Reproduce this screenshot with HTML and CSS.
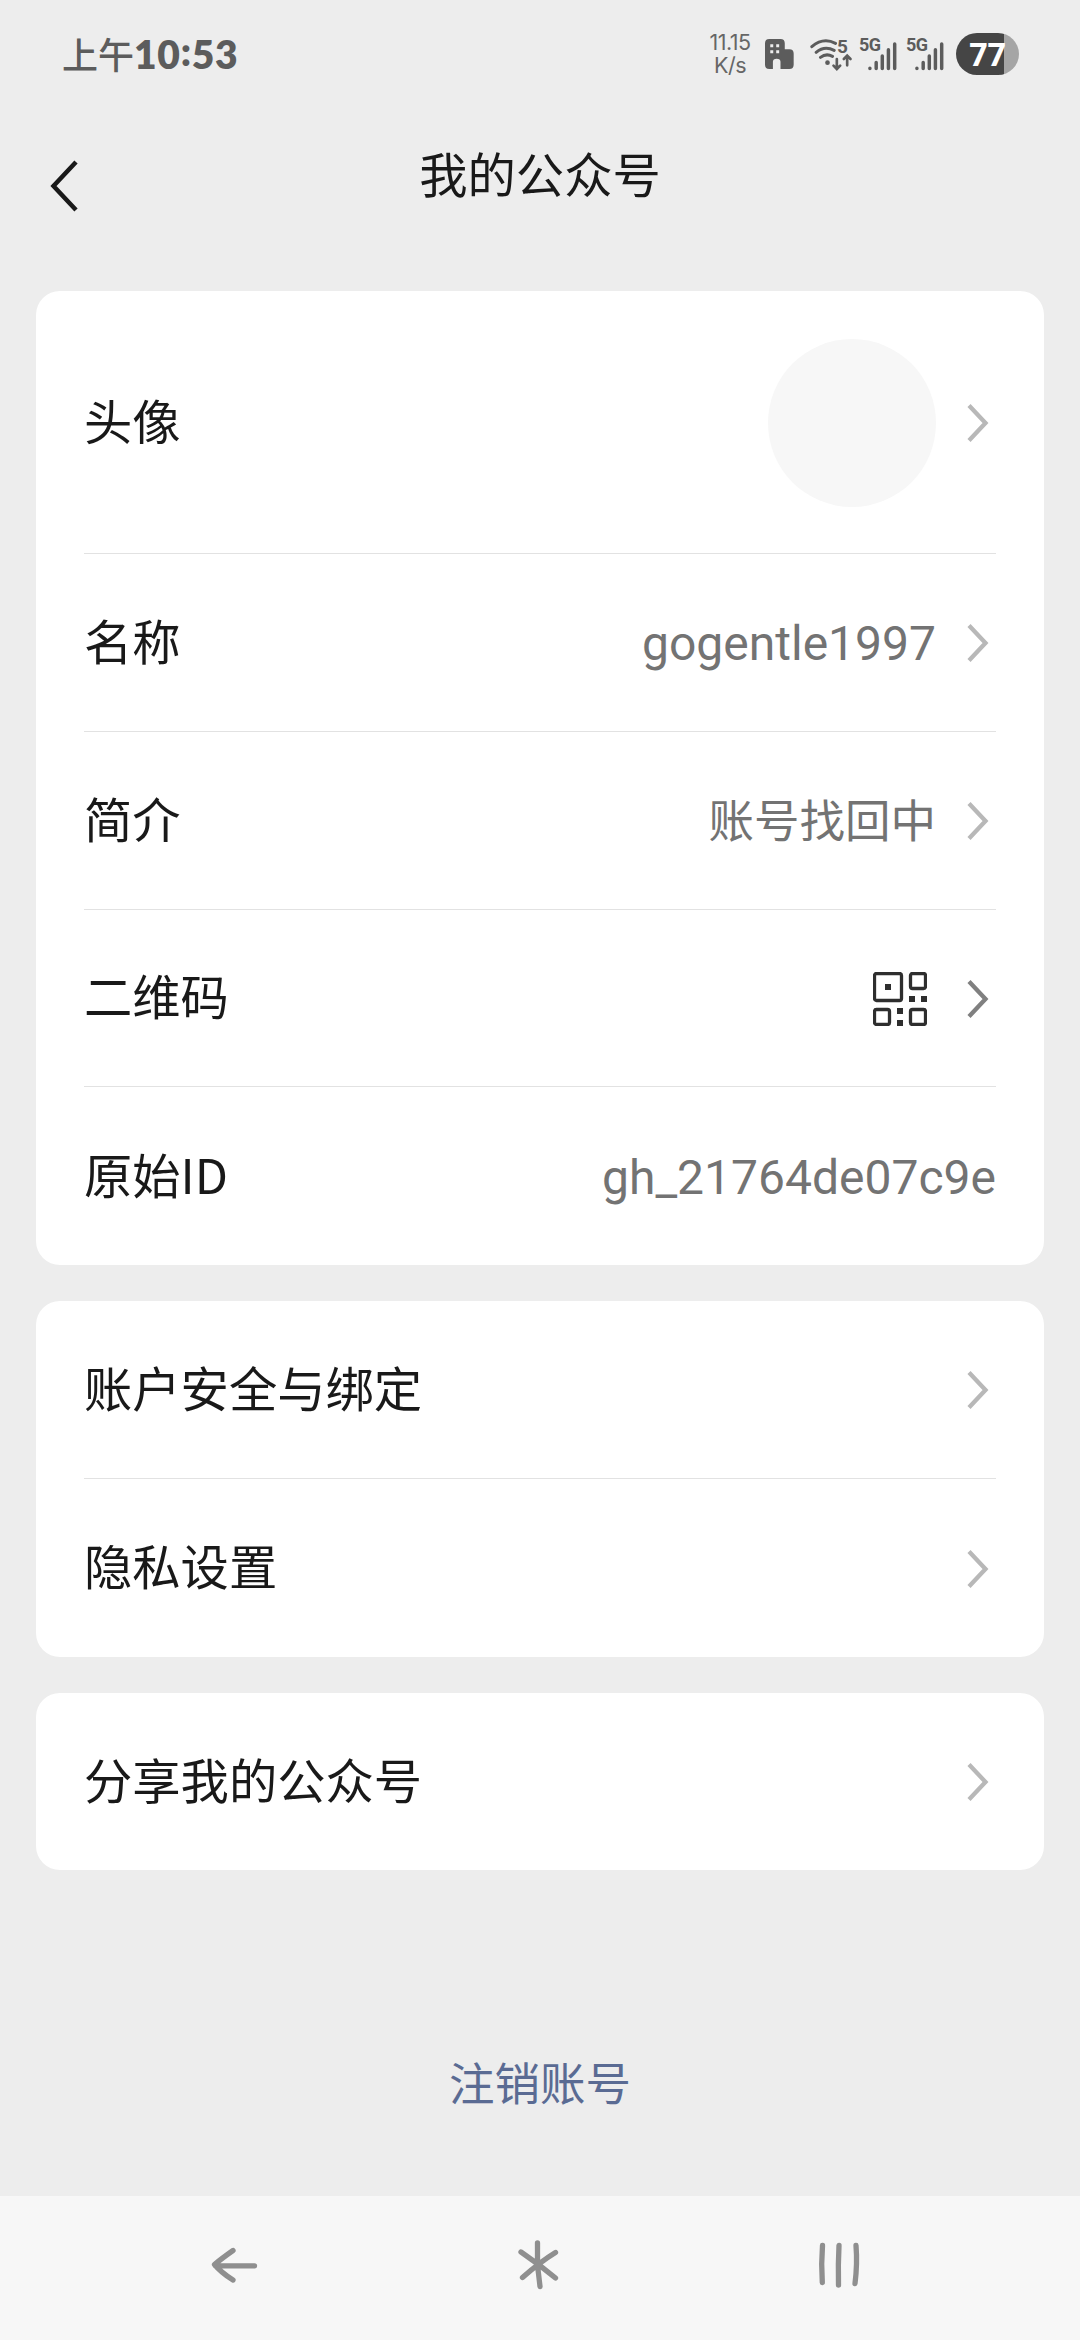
FILE: index.html
```html
<!DOCTYPE html>
<html lang="zh-CN">
<head>
<meta charset="utf-8">
<title>我的公众号</title>
<link rel="stylesheet" href="styles.css">
</head>
<body>
<svg class="defs" width="0" height="0">
  <symbol id="chevron" viewBox="0 0 22 40"><path d="M2 2.5 18.5 20 2 37.500" fill="none" stroke="currentColor" stroke-width="4.300"/></symbol>
  <symbol id="signal" viewBox="510 50 112 102">
    <g stroke="currentColor" stroke-width="10.500" stroke-linecap="round"><path d="M540 144v1M559 127v18M577.500 107v38M596 88v57M615 71v74"/></g>
  </symbol>
</svg>
<div class="screen">
  <header class="status">
    <div class="time">上午<b>10<i>:</i>53</b></div>
    <div class="speed"><span>11.15</span><span>K/s</span></div>
    <svg class="building" viewBox="222 57 88 91" fill="currentColor"><path fill-rule="evenodd" d="M235 57h34q13 0 13 13v18h14q13 0 13 13v34q0 13-13 13h-27v-22q0-9-11.500-9t-11.500 9v22h-11q-13 0-13-13v-65q0-13 13-13zM238 73v9h9v-9zm18 0v9h9v-9zm-18 18v9h9v-9zm18 0v9h9v-9z"/></svg>
    <div class="wifi">
      <svg viewBox="358 57 128 96" fill="none" stroke="currentColor" stroke-width="9" stroke-linecap="round"><path d="M363 80Q397 51 434 70M376 97Q401 76 430 91M389 112Q406 99 425 109"/><circle cx="410" cy="128" r="7" fill="currentColor" stroke="none"/><path d="M438 117v29M428 137l10 10 10-10M469 136v-28M459 117l10-10 10 10" stroke-width="8"/></svg>
      <span>5</span>
    </div>
    <div class="cell"><svg><use href="#signal"/></svg><span>5G</span></div>
    <div class="cell cell-two"><svg><use href="#signal"/></svg><span>5G</span></div>
    <div class="battery">77</div>
  </header>
  <nav class="title-bar">
    <svg class="back" viewBox="0 0 28 52"><path d="M26 2 3.500 26 26 50" fill="none" stroke="currentColor" stroke-width="4.500"/></svg>
    <h1>我的公众号</h1>
  </nav>
  <main>
    <section class="card">
      <div class="row row-avatar"><span class="label">头像</span><span class="avatar"></span><svg class="chev"><use href="#chevron"/></svg></div>
      <div class="row"><span class="label">名称</span><span class="value">gogentle1997</span><svg class="chev"><use href="#chevron"/></svg></div>
      <div class="row"><span class="label">简介</span><span class="value value-cn">账号找回中</span><svg class="chev"><use href="#chevron"/></svg></div>
      <div class="row"><span class="label">二维码</span>
        <svg class="qr" viewBox="0 0 54 54"><g fill="none" stroke="currentColor" stroke-width="3.300"><rect x="1.500" y="1.500" width="27" height="27" rx="2"/><rect x="37.500" y="1.500" width="15" height="15" rx="2"/><rect x="1.500" y="37.500" width="15" height="15" rx="2"/><rect x="37.500" y="37.500" width="15" height="15" rx="2"/></g><path d="M12 12h6v6h-6zM36 24h6v6h-6zM48 24h6v6h-6zM24 36h6v6h-6zM24 48h6v6h-6z" fill="currentColor"/></svg>
        <svg class="chev chev-dark"><use href="#chevron"/></svg></div>
      <div class="row"><span class="label">原始ID</span><span class="value value-end">gh_21764de07c9e</span></div>
    </section>
    <section class="card">
      <div class="row"><span class="label">账户安全与绑定</span><svg class="chev"><use href="#chevron"/></svg></div>
      <div class="row"><span class="label">隐私设置</span><svg class="chev"><use href="#chevron"/></svg></div>
    </section>
    <section class="card">
      <div class="row"><span class="label">分享我的公众号</span><svg class="chev"><use href="#chevron"/></svg></div>
    </section>
    <a class="logout">注销账号</a>
  </main>
  <footer class="nav">
    <svg viewBox="210 2240 48 50"><path d="M233 2250.500Q221 2259 214.500 2264.500Q221 2272.500 233 2280M215.500 2265.800H254.500"/></svg>
    <svg viewBox="515 2240 48 50"><path d="M537.500 2243V2265L540 2286.500M521 2252Q540 2265 555.500 2278M555.500 2252.500Q540 2262 522.500 2277.500"/></svg>
    <svg viewBox="815 2240 48 50"><path d="M822.500 2245.500Q821 2264 822.300 2282.500M839 2245.500Q838 2264 838.500 2285M856 2245.500Q857.500 2264 855 2283.500"/></svg>
  </footer>
</div>
</body>
</html>
```
FILE: styles.css
```css
* { box-sizing: border-box; }
body { margin: 0; background: #ededed; font-family: Roboto, "Noto Sans CJK SC", sans-serif; }
svg { display: block; flex: none; }
.defs { position: absolute; }
.screen { width: 1080px; height: 2340px; display: flex; flex-direction: column; background: #ededed; }

.status { height: 110px; padding: 0 61px 0 62px; display: flex; align-items: flex-start; color: #5c5c5c; }
.time { flex: 1; padding-top: 26px; font: 500 36px/54px "Noto Sans CJK SC", sans-serif; white-space: nowrap; }
.time b { font: 800 39px/54px Lato, sans-serif; letter-spacing: 0.700px; }
.time i { font-style: normal; position: relative; top: -3px; }
.speed { width: 50px; margin: 31px 10px 0 0; display: flex; flex-direction: column; align-items: center; font: 400 21.500px/23px Inter, sans-serif; letter-spacing: -0.500px; color: #666; }
.building { width: 29px; height: 30px; margin: 39px 16px 0 0; }
.wifi { width: 43px; margin: 39px 7px 0 0; position: relative; }
.wifi svg { width: 43px; height: 32px; }
.wifi span { position: absolute; left: 27px; top: -1px; font: 700 19px/18px Roboto, sans-serif; }
.cell { width: 37px; margin: 37px 10px 0 0; position: relative; }
.cell-two { margin-right: 12px; }
.cell svg { width: 37px; height: 34px; }
.cell span { position: absolute; left: -1px; top: -1px; font: 700 18px/18px Roboto, sans-serif; letter-spacing: -0.500px; }
.battery { width: 63px; height: 42px; margin-top: 33px; border-radius: 21px; background: linear-gradient(90deg, #454545 48px, #a5a5a5 48px); color: #fff; font: 700 32px/42px "Open Sans", sans-serif; text-align: center; }

.title-bar { height: 181px; display: flex; align-items: flex-start; padding: 0 50px; color: #191919; }
.back { width: 28px; height: 52px; margin-top: 50px; }
h1 { flex: 1; margin: 27px 28px 0 0; text-align: center; font: 400 48.300px/70px "Noto Sans CJK SC", sans-serif; }

main { flex: 1; padding: 0 36px; display: flex; flex-direction: column; }
.card { background: #fff; border-radius: 24px; padding: 0 48px; margin-bottom: 36px; }
.row { height: 177.750px; padding-top: 2px; display: flex; align-items: center; border-bottom: 1.500px solid #e2e2e2; }
.row:last-child { border-bottom: 0; }
.row-avatar { height: 263px; }
.label { flex: 1; padding-bottom: 9px; font: 400 48.300px/70px "Noto Sans CJK SC", sans-serif; color: #191919; }
.value { padding-top: 2px; font-size: 48px; line-height: 70px; color: #737373; margin-right: 31px; }
.value-cn { padding: 0 0 7px; font: 400 45.500px/70px "Noto Sans CJK SC", sans-serif; }
.value-end { margin-right: 0; }
.avatar { width: 168px; height: 168px; border-radius: 50%; background: #f7f7f7; margin-right: 31px; }
.chev { width: 22px; height: 40px; margin-right: 7px; color: #b8b8b8; }
.chev-dark { color: #808080; }
.qr { width: 54px; height: 54px; color: #2e2e2e; margin-right: 40px; }
.logout { margin-top: 141px; text-align: center; font: 400 45.500px/68px "Noto Sans CJK SC", sans-serif; color: #5a6b93; }

.nav { height: 144px; background: #f7f7f7; display: grid; grid-template-columns: 305px 300px 48px; padding: 44px 0 0 210px; }
.nav svg { width: 48px; height: 50px; fill: none; stroke: #8f8f8f; stroke-width: 5.300; stroke-linecap: round; stroke-linejoin: round; }
```
